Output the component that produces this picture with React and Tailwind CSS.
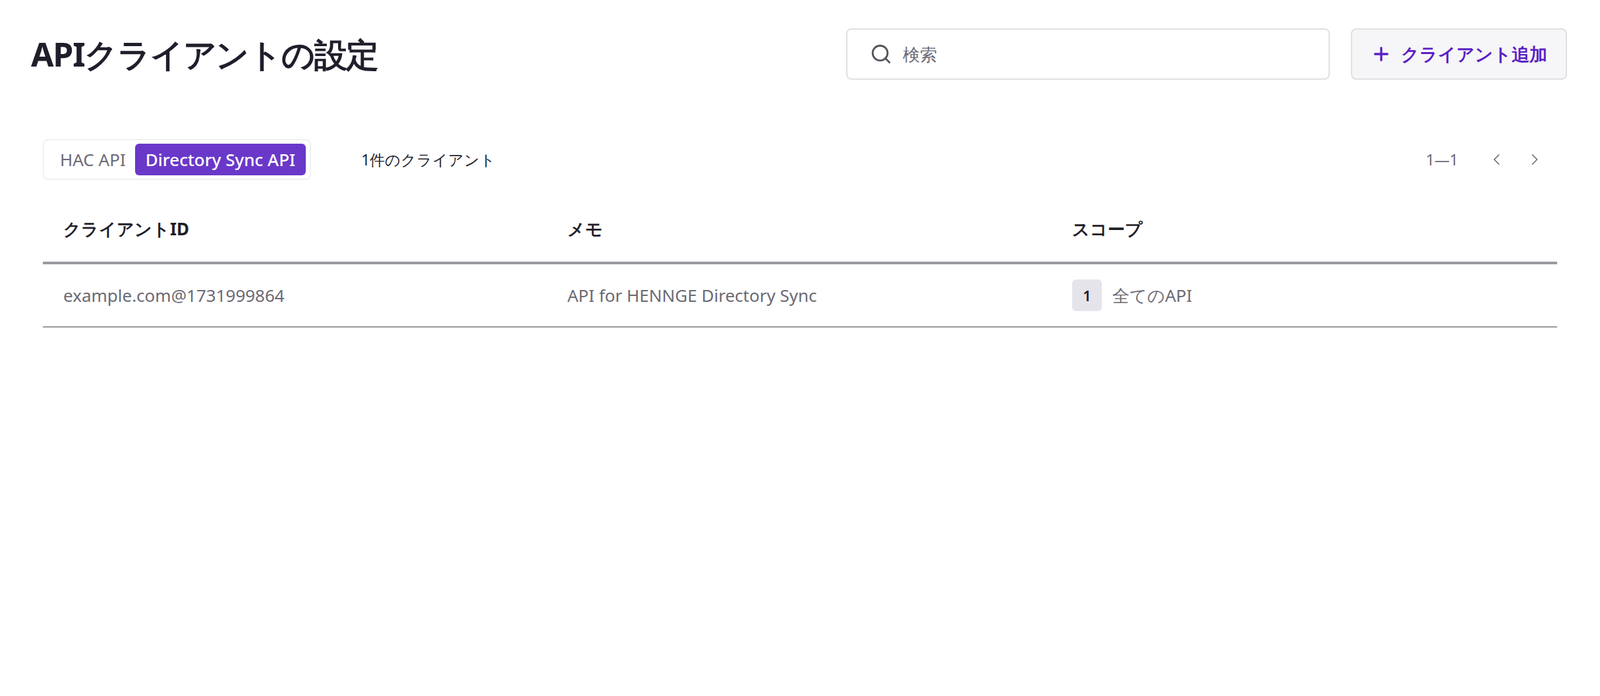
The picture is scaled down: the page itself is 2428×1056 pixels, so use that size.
import React from "react";
import { Search, Plus, ChevronLeft, ChevronRight } from "lucide-react";

export default function App() {
  return (
    <div className="w-[2428px] h-[1056px] bg-white font-['Noto_Sans_CJK_JP','Noto_Sans',sans-serif] text-[#1f1e2b]">
      {/* HEADER */}
      <div className="flex items-center justify-between pl-[47px] pr-[50px] pt-[43px] h-[121px]">
        <h1 className="text-[50px] font-bold leading-none tracking-tight">APIクライアントの設定</h1>
        <div className="flex items-center gap-[32px]">
          <div className="flex items-center gap-[16px] w-[734px] h-[78px] border-2 border-[#e0e0e3] rounded-[8px] px-[34px]">
            <Search className="w-[34px] h-[34px] text-[#55545f]" strokeWidth={2} />
            <span className="text-[26px] text-[#6b6a74]">検索</span>
          </div>
          <button className="flex items-center gap-[14px] w-[328px] h-[78px] justify-center border-2 border-[#e0e0e3] bg-[#f6f6f8] rounded-[8px] text-[#5b1fc4] text-[27px] font-semibold">
            <Plus className="w-[32px] h-[32px]" strokeWidth={2.5} />
            クライアント追加
          </button>
        </div>
      </div>

      {/* TOOLBAR */}
      <div className="flex items-center justify-between mt-[90px] pl-[65px] pr-[85px]">
        <div className="flex items-center gap-[76px]">
          <div className="flex items-center h-[62px] border-2 border-[#f0f0f2] rounded-[8px] px-[6px] gap-[14px]">
            <span className="pl-[18px] text-[26px] text-[#6b6a74]">HAC API</span>
            <span className="bg-[#6a38c9] text-white text-[26px] font-medium rounded-[6px] px-[16px] h-[48px] flex items-center">Directory Sync API</span>
          </div>
          <span className="text-[23px] text-[#1f1e2b]">1件のクライアント</span>
        </div>
        <div className="flex items-center gap-[44px] text-[#6b6a74]">
          <span className="text-[23px]">1—1</span>
          <div className="flex items-center gap-[30px]">
            <ChevronLeft className="w-[28px] h-[28px]" strokeWidth={1.5} />
            <ChevronRight className="w-[28px] h-[28px]" strokeWidth={1.5} />
          </div>
        </div>
      </div>

      {/* TABLE */}
      <div className="mx-[65px] w-[2298px] mt-[24px]">
        <div className="grid grid-cols-3 h-[104px] items-center border-b-[4px] border-[#9a9a9e] text-[26px] font-bold">
          <div className="pl-[31px]">クライアントID</div>
          <div className="pl-[30px]">メモ</div>
          <div className="pl-[30px]">スコープ</div>
        </div>
        <div className="grid grid-cols-3 h-[96px] items-center border-b-[2px] border-[#9a9a9e] text-[26px] text-[#6b6a74]">
          <div className="pl-[31px]">example.com@1731999864</div>
          <div className="pl-[30px]">API for HENNGE Directory Sync</div>
          <div className="pl-[30px] flex items-center gap-[16px]">
            <span className="w-[45px] h-[48px] rounded-[6px] bg-[#e5e4ea] text-[#1f1e2b] text-[22px] font-semibold flex items-center justify-center">1</span>
            <span>全てのAPI</span>
          </div>
        </div>
      </div>
    </div>
  );
}
